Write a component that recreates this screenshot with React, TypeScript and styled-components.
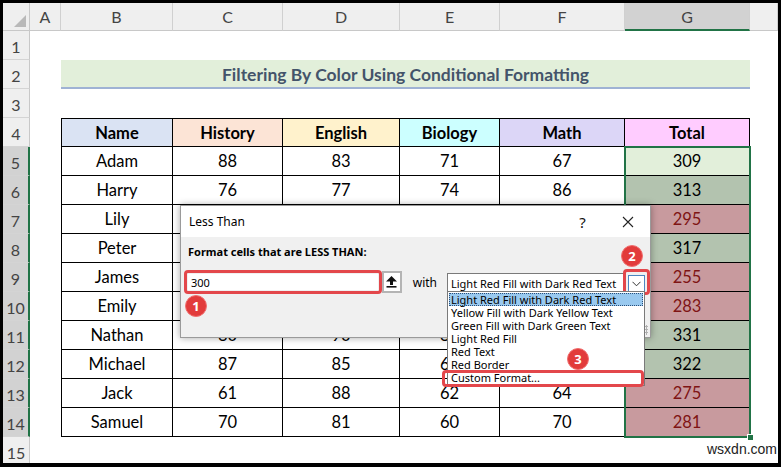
import styled, { createGlobalStyle } from "styled-components";

const GlobalStyle = createGlobalStyle`
  html, body { margin: 0; padding: 0; background: #000; }
  body { width: 781px; height: 467px; overflow: hidden; }
  * { box-sizing: border-box; }
`;

const Frame = styled.div`
  width: 781px;
  height: 467px;
  padding: 3px 3px 4px 3px;
  background: #000;
`;

const Sheet = styled.div`
  position: relative;
  width: 775px;
  height: 460px;
  background: #fff;
  overflow: hidden;
  font-family: Lato, "Liberation Sans", sans-serif;
`;

const Grid = styled.div`
  display: grid;
  grid-template-columns: 27px 31px 112px 110px 117px 100px 125px 125px 1fr;
  grid-template-rows: 28px repeat(15, 29px);
`;

const Corner = styled.div`
  position: relative;
  background: #efefef;
  border-right: 1px solid #c8c8c8;
  border-bottom: 1px solid #c8c8c8;
  svg { position: absolute; right: 3px; bottom: 3px; }
`;

const ColHead = styled.div<{ $active?: boolean }>`
  display: flex;
  align-items: center;
  justify-content: center;
  background: ${(p) => (p.$active ? "#d2d2d2" : "#efefef")};
  border-right: 1px solid #d0d0d0;
  border-bottom: ${(p) => (p.$active ? "2px solid #217346" : "1px solid #c8c8c8")};
  color: #444;
  font-size: 16px;
`;

const RowHead = styled.div<{ $active?: boolean }>`
  display: flex;
  align-items: center;
  justify-content: center;
  padding-top: 2px;
  background: ${(p) => (p.$active ? "#d2d2d2" : "#efefef")};
  border-bottom: 1px solid #d4d4d4;
  border-right: ${(p) => (p.$active ? "2px solid #217346" : "1px solid #c8c8c8")};
  color: #444;
  font-size: 16px;
`;

const Blank = styled.div<{ $span?: number }>`
  grid-column: span ${(p) => p.$span ?? 1};
`;

const Title = styled.div`
  grid-column: span 6;
  display: flex;
  align-items: center;
  justify-content: center;
  padding-top: 1px;
  background: #e2efda;
  border-bottom: 2px solid #9fb2d4;
  color: #44546a;
  font-size: 17.5px;
  font-weight: 700;
`;

const Cell = styled.div<{ $bg?: string; $bold?: boolean; $color?: string; $top?: boolean; $first?: boolean }>`
  display: flex;
  align-items: center;
  justify-content: center;
  background: ${(p) => p.$bg ?? "#fff"};
  border-right: 1px solid #000;
  border-bottom: 1px solid #000;
  border-top: ${(p) => (p.$top ? "1px solid #000" : "none")};
  border-left: ${(p) => (p.$first ? "1px solid #000" : "none")};
  color: ${(p) => p.$color ?? "#000"};
  font-size: 16.5px;
  font-weight: ${(p) => (p.$bold ? 700 : 400)};
`;

const Selection = styled.div`
  position: absolute;
  left: 621px;
  top: 143px;
  width: 127px;
  height: 292px;
  border: 2px solid #217346;
  pointer-events: none;
`;

const FillHandle = styled.div`
  position: absolute;
  right: -5px;
  bottom: -5px;
  width: 7px;
  height: 7px;
  background: #217346;
  border: 1px solid #fff;
`;

const Dialog = styled.div`
  position: absolute;
  left: 177px;
  top: 202px;
  width: 471px;
  height: 133px;
  display: flex;
  flex-direction: column;
  background: #f0f0f0;
  border: 1px solid #9a9a9a;
  box-shadow: 0 0 7px rgba(0, 0, 0, 0.35);
  font-family: "Noto Sans", "Open Sans", sans-serif;
  font-size: 11px;
  color: #000;
`;

const TitleBar = styled.div`
  height: 31px;
  display: flex;
  align-items: center;
  background: #fff;
  padding-left: 8px;
  font-size: 12px;
`;

const TitleText = styled.span`
  flex: 1;
`;

const CaptionButton = styled.span`
  width: 45px;
  display: flex;
  align-items: center;
  justify-content: center;
  font-size: 15px;
  color: #111;
`;

const Body = styled.div`
  flex: 1;
  position: relative;
  padding: 7px 0 0 3px;
`;

const Label = styled.div`
  margin-left: 4px;
  font-weight: 700;
  font-size: 11px;
  line-height: 15px;
`;

const FieldRow = styled.div`
  display: flex;
  align-items: center;
  margin-top: 10px;
`;

const InputRing = styled.div`
  width: 200px;
  height: 24px;
  padding: 1px;
  border: 3px solid #e3474b;
  border-radius: 4px;
`;

const Input = styled.div`
  height: 100%;
  background: #fff;
  padding-left: 3px;
  display: flex;
  align-items: center;
  font-size: 11px;
`;

const RefButton = styled.div`
  width: 20px;
  height: 22px;
  display: flex;
  align-items: center;
  justify-content: center;
  background: #fff;
  border: 2px solid #b4b4b4;
`;

const WithText = styled.span`
  margin-left: 11px;
  font-size: 12px;
`;

const Combo = styled.div`
  position: relative;
  display: flex;
  align-items: center;
  margin-left: 10px;
`;

const SelectField = styled.div`
  width: 176px;
  height: 21px;
  margin-top: 3px;
  display: flex;
  align-items: center;
  padding-left: 3px;
  background: #fff;
  border: 1px solid #7a7a7a;
  border-right: none;
  font-size: 11px;
  white-space: nowrap;
`;

const DropRing = styled.div`
  width: 27px;
  height: 26px;
  padding: 3px 2px 0 2px;
  border: 3px solid #e3474b;
  border-radius: 4px;
  display: flex;
`;

const DropButton = styled.div`
  flex: 1;
  height: 17px;
  display: flex;
  align-items: center;
  justify-content: center;
  background: #fff;
  border: 1px solid #4d86c0;
`;

const List = styled.div`
  position: absolute;
  left: 0;
  top: 22px;
  width: 198px;
  padding: 1px;
  background: #fff;
  border: 1px solid #7a7a7a;
  z-index: 2;
`;

const ListItem = styled.div<{ $selected?: boolean }>`
  height: 13px;
  line-height: 13px;
  padding-left: 2px;
  font-size: 11px;
  white-space: nowrap;
  background: ${(p) => (p.$selected ? "#99c9ef" : "transparent")};
  outline: ${(p) => (p.$selected ? "1px dotted #2a4f7a" : "none")};
  outline-offset: -1px;
`;

const ItemRing = styled.div`
  position: absolute;
  left: -6px;
  bottom: -2px;
  width: 202px;
  height: 17px;
  border: 3px solid #e3474b;
  border-radius: 4px;
`;

const Badge = styled.div<{ $x: number; $y: number }>`
  position: absolute;
  left: ${(p) => p.$x}px;
  top: ${(p) => p.$y}px;
  width: 22px;
  height: 22px;
  border-radius: 50%;
  background: #e23b3b;
  border: 1px solid #f07070;
  color: #fff;
  font-family: "Noto Sans", "Liberation Sans", sans-serif;
  font-size: 13px;
  font-weight: 700;
  display: flex;
  align-items: center;
  justify-content: center;
  z-index: 3;
`;

const Grip = styled.div`
  position: absolute;
  right: 2px;
  bottom: 2px;
  width: 6px;
  height: 10px;
  background-image: radial-gradient(#b0b0b0 1px, transparent 1.2px);
  background-size: 3px 3px;
`;

const Watermark = styled.div`
  position: absolute;
  left: 704px;
  top: 438px;
  font-family: "Liberation Sans", Arial, sans-serif;
  font-size: 14px;
  color: #222;
`;

const heads = [
  { label: "Name", bg: "#dae3f3" },
  { label: "History", bg: "#fce4d6" },
  { label: "English", bg: "#fff2cc" },
  { label: "Biology", bg: "#ccffff" },
  { label: "Math", bg: "#dcd6f7" },
  { label: "Total", bg: "#ffccff" },
];

// scores hidden behind the dialog are left blank (null)
type Score = number | null;
type Row = [string, Score, Score, Score, Score, number];

const rows: Row[] = [
  ["Adam", 88, 83, 71, 67, 309],
  ["Harry", 76, 77, 74, 86, 313],
  ["Lily", null, null, null, null, 295],
  ["Peter", null, null, null, null, 317],
  ["James", null, null, null, null, 255],
  ["Emily", null, null, null, null, 283],
  ["Nathan", 80, 90, 85, null, 331],
  ["Michael", 87, 85, 68, 82, 322],
  ["Jack", 61, 88, 62, 64, 275],
  ["Samuel", 70, 81, 60, 70, 281],
];

const totalTone = (v: number, i: number) => {
  if (i === 0) return { bg: "#e2efda", color: "#000" };
  if (v < 300) return { bg: "#c89a9e", color: "#7f1414" };
  return { bg: "#b3c3af", color: "#000" };
};

const options = [
  "Light Red Fill with Dark Red Text",
  "Yellow Fill with Dark Yellow Text",
  "Green Fill with Dark Green Text",
  "Light Red Fill",
  "Red Text",
  "Red Border",
  "Custom Format...",
];

const cols = ["A", "B", "C", "D", "E", "F", "G"];

const App: React.FC = () => {
  return (
    <Frame>
      <GlobalStyle />
      <Sheet>
        <Grid>
          <Corner>
            <svg width="12" height="12" viewBox="0 0 12 12">
              <polygon points="12,0 12,12 0,12" fill="#b9b9b9" />
            </svg>
          </Corner>
          {cols.map((c) => (
            <ColHead key={c} $active={c === "G"}>
              {c}
            </ColHead>
          ))}
          <ColHead />

          <RowHead>1</RowHead>
          <Blank $span={8} />

          <RowHead>2</RowHead>
          <Blank />
          <Title>Filtering By Color Using Conditional Formatting</Title>
          <Blank />

          <RowHead>3</RowHead>
          <Blank $span={8} />

          <RowHead>4</RowHead>
          <Blank />
          {heads.map((h, i) => (
            <Cell key={h.label} $bg={h.bg} $bold $top $first={i === 0}>
              {h.label}
            </Cell>
          ))}
          <Blank />

          {rows.map((r, i) => {
            const tone = totalTone(r[5], i);
            return [
              <RowHead key={`h${i}`} $active>
                {i + 5}
              </RowHead>,
              <Blank key={`a${i}`} />,
              <Cell key={`n${i}`} $first>
                {r[0]}
              </Cell>,
              <Cell key={`c${i}`}>{r[1]}</Cell>,
              <Cell key={`d${i}`}>{r[2]}</Cell>,
              <Cell key={`e${i}`}>{r[3]}</Cell>,
              <Cell key={`f${i}`}>{r[4]}</Cell>,
              <Cell key={`g${i}`} $bg={tone.bg} $color={tone.color}>
                {r[5]}
              </Cell>,
              <Blank key={`z${i}`} />,
            ];
          })}

          <RowHead>15</RowHead>
          <Blank $span={8} />
        </Grid>

        <Selection>
          <FillHandle />
        </Selection>

        <Dialog>
          <TitleBar>
            <TitleText>Less Than</TitleText>
            <CaptionButton>?</CaptionButton>
            <CaptionButton>
              <svg width="12" height="12" viewBox="0 0 12 12">
                <path d="M1 1 L11 11 M11 1 L1 11" stroke="#222" strokeWidth="1.1" />
              </svg>
            </CaptionButton>
          </TitleBar>
          <Body>
            <Label>Format cells that are LESS THAN:</Label>
            <FieldRow>
              <InputRing>
                <Input>300</Input>
              </InputRing>
              <RefButton>
                <svg width="11" height="12" viewBox="0 0 11 12">
                  <polygon points="5.5,0 11,5.5 7,5.5 7,9 4,9 4,5.5 0,5.5" fill="#111" />
                  <rect x="0.5" y="10" width="10" height="1.6" fill="#111" />
                </svg>
              </RefButton>
              <WithText>with</WithText>
              <Combo>
                <SelectField>Light Red Fill with Dark Red Text</SelectField>
                <DropRing>
                  <DropButton>
                    <svg width="9" height="6" viewBox="0 0 9 6">
                      <polyline points="0.5,0.8 4.5,4.8 8.5,0.8" fill="none" stroke="#333" strokeWidth="1" />
                    </svg>
                  </DropButton>
                </DropRing>
                <List>
                  {options.map((o, i) => (
                    <ListItem key={o} $selected={i === 0}>
                      {o}
                    </ListItem>
                  ))}
                  <ItemRing />
                </List>
              </Combo>
            </FieldRow>
            <Grip />
          </Body>
        </Dialog>

        <Badge $x={182} $y={292}>1</Badge>
        <Badge $x={618} $y={242}>2</Badge>
        <Badge $x={564} $y={345}>3</Badge>

        <Watermark>wsxdn.com</Watermark>
      </Sheet>
    </Frame>
  );
};

export default App;
